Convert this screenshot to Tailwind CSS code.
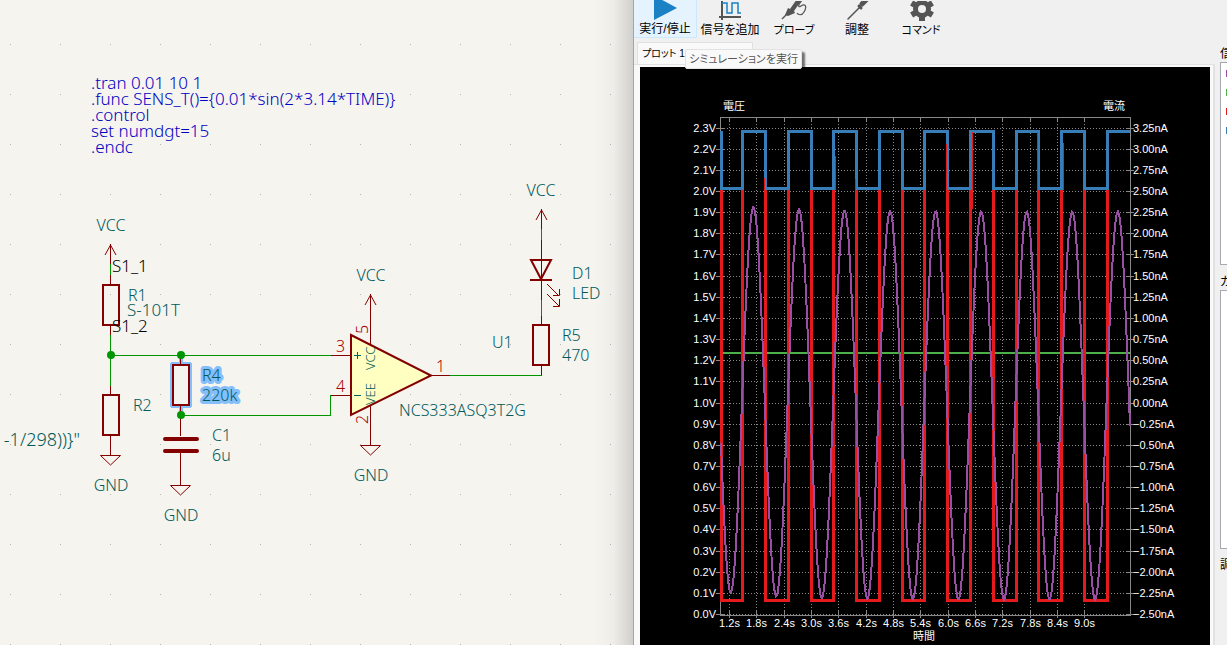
<!DOCTYPE html>
<html lang="ja">

<head>
    <meta charset="UTF-8">
    <meta name="viewport" content="width=device-width, initial-scale=1.0">
    <title>Simulator</title>
    <script src="https://cdn.jsdelivr.net/npm/@tailwindcss/browser@4"></script>
</head>

<body class="flex h-screen overflow-hidden bg-[#f5f4ef] font-['Liberation_Sans','Noto_Sans_CJK_JP',sans-serif]">

    <!-- schematic editor -->
    <main class="relative w-[634px] shrink-0 overflow-hidden">
        <svg class="h-full w-full" fill="none" font-family="'Noto Sans', sans-serif" font-size="16" font-weight="300" shape-rendering="crispEdges">
            <defs>
                <pattern id="dots" x="10" y="44" width="50" height="50" patternUnits="userSpaceOnUse">
                    <rect width="1" height="1" fill="#b5b5b0" />
                </pattern>
            </defs>
            <rect width="100%" height="100%" fill="url(#dots)" />

            <!-- selection glow behind R4 -->
            <g stroke="#84bffb" stroke-linejoin="round">
                <path stroke-width="4" d="M181 356V414" />
                <rect stroke-width="6" x="173" y="365" width="16" height="40" />
            </g>

            <!-- wires -->
            <path stroke="#009600" d="M110.500 264V276M110.500 335V386M110.500 355.500H331M181 415.500H330.500V395.500H331M450 375.500H541.500M541.500 229V240M541.500 300V316" />

            <!-- pins -->
            <path stroke="#840000" d="M110.500 244V264M110.500 275V285M110.500 326V335M110.500 386V395M110.500 436V455M180.500 356V364M180.500 405V436M180.500 452V485M331 355.500H351M331 395.500H351M431 375.500H450M370.500 294V344M370.500 405V446M541.500 209V229M541.500 240V300M541.500 316V325M541.500 366V375" />

            <!-- VCC arrows, GND triangles, LED rays -->
            <g stroke="#840000" shape-rendering="auto">
                <path d="M105 255L110.500 245L116 255M365 305L370.500 295L376 305M536 220L541.500 210L547 220" />
                <path d="M100.500 455.500H120.500L110.500 465ZM170.500 485.500H190.500L180.500 495ZM360.500 445.500H380.500L370.500 455Z" />
                <path d="M547 284L559 296M559.500 289V295.500H553M547 294L559 306M559.500 299V306.500H553" />
            </g>

            <!-- bodies -->
            <g stroke="#840000" stroke-width="2">
                <rect x="103" y="285" width="16" height="40" />
                <rect x="103" y="395" width="16" height="40" />
                <rect x="173" y="365" width="16" height="40" fill="#f5f4ef" />
                <rect x="533" y="325" width="16" height="40" />
                <path d="M530 280H552" />
                <path shape-rendering="auto" d="M531 260H551L541 279Z" />
                <path shape-rendering="auto" fill="#ffffc2" d="M351 335L431 375.500L351 415Z" />
            </g>
            <path stroke="#840000" d="M370.500 335V345M370.500 405V415" />
            <path stroke="#840000" stroke-width="4" stroke-linecap="round" shape-rendering="auto" d="M165 439H197M165 451H197" />

            <g fill="#009600" shape-rendering="auto">
                <circle cx="111" cy="355" r="4" />
                <circle cx="181" cy="355" r="4" />
                <circle cx="181" cy="415" r="4" />
            </g>

            <!-- spice directives -->
            <g fill="#0000c2" font-size="17">
                <text x="91" y="89">.tran 0.01 10 1</text>
                <text x="91" y="105">.func SENS_T()={0.01*sin(2*3.14*TIME)}</text>
                <text x="91" y="121">.control</text>
                <text x="91" y="137">set numdgt=15</text>
                <text x="91" y="153">.endc</text>
            </g>

            <g fill="#000" font-size="17">
                <text x="112" y="272">S1_1</text>
                <text x="112" y="332">S1_2</text>
            </g>

            <g fill="#005a5a">
                <text x="128" y="301">R1</text>
                <text x="127" y="316" font-size="17">S-101T</text>
                <text x="133" y="411">R2</text>
                <text x="80" y="446" text-anchor="end" font-size="18">-1/298))}"</text>
                <g stroke="#84bffb" stroke-width="6" stroke-linejoin="round" paint-order="stroke">
                    <text x="202" y="381">R4</text>
                    <text x="202" y="401">220k</text>
                </g>
                <text x="212" y="441">C1</text>
                <text x="212" y="461">6u</text>
                <text x="492" y="348">U1</text>
                <text x="399" y="416">NCS333ASQ3T2G</text>
                <text x="572" y="279">D1</text>
                <text x="572" y="299">LED</text>
                <text x="562" y="341">R5</text>
                <text x="562" y="361">470</text>
                <g text-anchor="middle">
                    <text x="111" y="231">VCC</text>
                    <text x="371" y="281">VCC</text>
                    <text x="541" y="196">VCC</text>
                    <text x="111" y="491">GND</text>
                    <text x="181" y="521">GND</text>
                    <text x="371" y="481">GND</text>
                </g>
                <g font-size="13">
                    <text transform="translate(375 370) rotate(-90)">VCC</text>
                    <text transform="translate(375 405) rotate(-90)">VEE</text>
                </g>
            </g>
            <path stroke="#006464" d="M354 355.500H361M357.500 352V359M354 395.500H361" />

            <g fill="#a90000">
                <text x="336" y="352">3</text>
                <text x="336" y="392">4</text>
                <text x="436" y="372">1</text>
                <text transform="translate(368 334) rotate(-90)">5</text>
                <text transform="translate(368 424) rotate(-90)">2</text>
            </g>
        </svg>
        <!-- shadow cast by the simulator window -->
        <div class="pointer-events-none absolute inset-y-0 right-0 w-10 border-r border-[#a5a5a3] bg-linear-to-r from-black/0 via-black/3 to-black/15"></div>
    </main>

    <!-- simulator window -->
    <section class="flex min-w-0 flex-1 flex-col bg-[#f0f0f0] text-xs text-black [font-feature-settings:'palt']">
        <div class="flex min-h-0 flex-1">
            <div class="flex min-w-0 flex-1 flex-col">
                <nav class="flex h-[38px] shrink-0 whitespace-nowrap">
                    <button class="flex w-[63px] flex-col items-center justify-end border-r border-b border-[#cce8ff] bg-[#e5f3ff] pb-px">
                        <svg class="h-[22px] w-8" viewBox="0 10 32 22"><path fill="#1a81c4" d="M5 5.500L28 18L5 30Z" /></svg>
                        <span class="leading-[14px]">実行/停止</span>
                    </button>
                    <button class="flex w-[66px] flex-col items-center justify-end pb-px">
                        <svg class="h-[22px] w-8" viewBox="0 10 32 22" fill="none">
                            <path stroke="#545454" stroke-width="2" d="M8 5V29M5 26H27" />
                            <path stroke="#1a81c4" stroke-width="1.500" d="M8 12H13V22H18V12H24V22H27" />
                        </svg>
                        <span class="leading-[14px]">信号を追加</span>
                    </button>
                    <button class="flex w-[62px] flex-col items-center justify-end pb-px">
                        <svg class="h-[22px] w-8" viewBox="0 10 32 22" fill="none" stroke="#545454">
                            <path stroke-width="1.500" d="M4 28L9 23" />
                            <path fill="#545454" stroke="none" d="M7 24L10 17L12 18L19 8L23 10L16 20L17 22L10 25Z" />
                            <path stroke-width="1.200" d="M25 8C19 15 20 17 23 15C28 12 29 16 26 21C24 25 20 24 19 22" />
                        </svg>
                        <span class="text-[11px] leading-[14px]">プローブ</span>
                    </button>
                    <button class="flex w-[64px] flex-col items-center justify-end pb-px">
                        <svg class="h-[22px] w-8" viewBox="0 10 32 22" stroke="#545454" stroke-linecap="round">
                            <path stroke-width="1.500" d="M7 28L19 16" />
                            <path stroke-width="5" d="M21 13L27 7" />
                            <path stroke-width="3" d="M18 15L20 17" />
                        </svg>
                        <span class="leading-[14px]">調整</span>
                    </button>
                    <button class="flex w-[64px] flex-col items-center justify-end pb-px">
                        <svg class="h-[22px] w-8" viewBox="0 10 32 22" fill="none" stroke="#545454">
                            <circle cx="17" cy="18" r="6.500" stroke-width="5" />
                            <path stroke-width="6" d="M17 6V10M17 26V30M6.600 12L10 14M24 22L27.400 24M6.600 24L10 22M24 14L27.400 12" />
                        </svg>
                        <span class="text-[11px] leading-[14px]">コマンド</span>
                    </button>
                </nav>

                <div class="relative flex h-[26px] shrink-0 items-end pl-[3px]">
                    <button class="h-[22px] w-[116px] border border-b-0 border-[#e0e0e0] bg-[#f9f9f9] pl-1 text-left text-[10px] leading-5">プロット 1</button>
                    <div role="tooltip" class="absolute top-[11px] left-[51px] z-10 h-5 rounded-xs border border-[#e2e2e2] bg-[#f9f9f9] px-[3px] text-[11px] leading-[18px] whitespace-nowrap text-[#575757] shadow-[3px_3px_2px_#0008]">シミュレーションを実行</div>
                </div>

                <div class="mr-[5px] min-h-0 flex-1 border-t border-r-2 border-[#e2e2e2] bg-[#f9f9f9] pt-[2px] pr-[3px] pl-[6px]">
                    <div class="h-full bg-black">
                        <svg id="plot" class="block h-full w-full" viewBox="640 67 570 578" preserveAspectRatio="xMinYMin meet" fill="none" font-family="'Liberation Sans', 'Noto Sans CJK JP', sans-serif" font-size="11" shape-rendering="crispEdges"></svg>
                    </div>
                </div>
            </div>

            <!-- side panels, running past the window edge -->
            <aside class="flex w-[7px] shrink-0 flex-col overflow-hidden whitespace-nowrap pt-[46px]">
                <h2 class="leading-4">信号</h2>
                <div class="h-[203px] w-40 shrink-0 border border-[#a5a8b0] bg-white pt-[7px] pl-[5px]">
                    <div class="mb-3 h-[7px] w-3 bg-[#984ea3]"></div>
                    <div class="mb-3 h-[7px] w-3 bg-[#4daf4a]"></div>
                    <div class="mb-3 h-[7px] w-3 bg-[#e41a1c]"></div>
                    <div class="h-[7px] w-3 bg-[#377eb8]"></div>
                </div>
                <h2 class="pt-[9px] leading-4">カーソル</h2>
                <div class="h-[259px] w-40 shrink-0 border border-[#a5a8b0] bg-white"></div>
                <h2 class="pt-2 leading-4">調整</h2>
            </aside>
        </div>
    </section>

    <script>
        const plot = document.querySelector("#plot")
        const left = 721, right = 1130, top_ = 118, bottom = 614
        const px = t => 720 + (t - 1) * 45.55
        const py = v => 614.5 - v * 211.5
        let html = ""

        // grid and axis labels
        for (let i = 0; i < 24; i++) {
            const y = Math.round(py(i / 10) - 0.5) + 0.5
            const amps = (i * 0.25 - 2.5).toFixed(2)
            html += `<path stroke="#888" stroke-dasharray="1 2" d="M${left} ${y}H${right}"/>`
            html += `<path stroke="#888" d="M716 ${y}H725M1127 ${y}H1134"/>`
            html += `<text fill="#fff" x="716" y="${y + 3}" text-anchor="end">${(i / 10).toFixed(1)}V</text>`
            html += `<text fill="#fff" x="1133" y="${y + 3}">${amps.replace("-", "−")}nA</text>`
        }
        for (let i = 0; i < 14; i++) {
            const t = 1.2 + i * 0.6
            const x = Math.round(px(t)) + 0.5
            html += `<path stroke="#888" stroke-dasharray="1 2" d="M${x} ${top_}V${bottom}"/>`
            html += `<path stroke="#888" d="M${x} 610V618M${x} ${top_}V121"/>`
            html += `<text fill="#fff" x="${x}" y="627" text-anchor="middle">${t.toFixed(1)}s</text>`
        }
        html += `<path stroke="#888" d="M720.5 117.5H1130.5V615.5H720.5Z"/>`
        html += `<text fill="#fff" x="723" y="110">電圧</text><text fill="#fff" x="1103" y="110">電流</text><text fill="#fff" x="913" y="640">時間</text>`

        html += `<path stroke="#4daf4a" stroke-width="2" d="M721 353H1130"/>`

        // square waves, toggling every half second
        let red = `M721 188V600`, blue = `M721 131V188`
        for (let i = 1; i < 18; i++) {
            const x = Math.round(px(1 + i / 2) - 0.5) + 0.5
            red += i % 2 ? `H${x}V131` : `H${x}V600`
            blue += i % 2 ? `H${x}V131` : `H${x}V188`
        }
        html += `<path stroke="#e41a1c" stroke-width="3" d="${red}V131H1130"/>`

        let purple = ""
        for (let x = 721; x <= 1130; x++) {
            const t = 1 + (x - 720) / 45.55
            const amp = 194
            const mid = 405.5 - 8 * Math.exp(-(t - 1) / 1.3)
            const y = mid + amp * Math.sin(2 * Math.PI * (t - 1) + 0.1)
            purple += `${purple ? "L" : "M"}${x} ${y.toFixed(1)}`
        }
        html += `<path stroke="#984ea3" stroke-width="2" d="${purple}"/>`

        html += `<path stroke="#377eb8" stroke-width="3" d="${blue}H1130"/>`
        // spots where the red edge shows beside the blue one
        html += `<path stroke="#e41a1c" d="M764.5 178V190M835.5 156V190M855.5 179V190M946.5 144V190M972.5 132V209M1037.5 132V203M1063.5 143V190"/>`
        plot.innerHTML = html
    </script>
</body>

</html>
